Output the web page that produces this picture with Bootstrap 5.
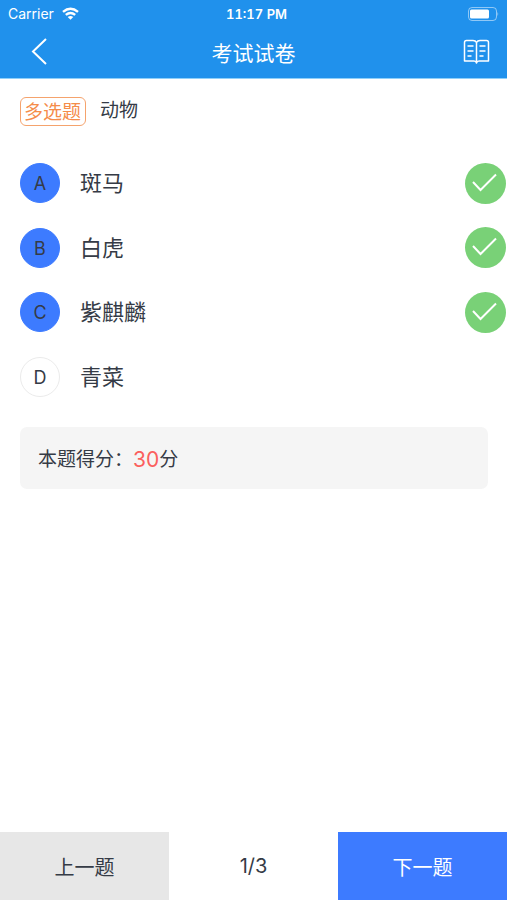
<!DOCTYPE html>
<html lang="zh-CN">
<head>
<meta charset="utf-8">
<meta name="viewport" content="width=device-width, initial-scale=1">
<title>考试试卷</title>
<link href="https://cdn.jsdelivr.net/npm/bootstrap@5.3.0/dist/css/bootstrap.min.css" rel="stylesheet">
<style>
  body { font-family: Inter, "Noto Sans CJK SC", sans-serif; color: #353b46; background: #fff; }
  .app-header { background: #2091ec; border-bottom: 1px solid #8fd0fa; }
  .status-bar { height: 27px; font-size: 14px; line-height: 20px; padding: 0 8px; }
  .status-time { font-size: 13px; font-weight: 600; font-variant-numeric: tabular-nums; margin-left: 6px; }
  .title-bar { height: 51px; padding-bottom: 2px; }
  .title-bar h1 { font-size: 21px; line-height: 32px; padding-top: 4px; }
  .title-bar .back { margin-left: 28px; }
  .title-bar .sheet { margin-right: 17px; }
  .question { padding: 18px 20px 0; min-height: 72px; }
  .type-tag { border: 1px solid #f5a36d; border-radius: 6px; color: #f58c4a; font-size: 19px; line-height: 24px; padding: 3px 4px 0 3px; }
  .question-text { font-size: 19px; line-height: 28px; margin-left: 14px; }
  .options { height: 258px; grid-template-rows: repeat(4, 1fr); }
  .option { padding: 0 1px 0 20px; }
  .letter { width: 40px; height: 40px; border: 1px solid #ebebeb; font-size: 18px; padding-top: 1px; }
  .btn-check:checked + .letter { background: #3d7bff; border-color: #3d7bff; }
  .option-text { font-size: 22px; line-height: 32px; }
  .score { margin: 18px 19px 0 20px; padding: 4px 18px 0; height: 62px; border-radius: 7px; background: #f5f5f5; font-size: 19px; }
  .points { color: #fb5f5d; font-size: 21px; }
  .pager > * { height: 68px; font-size: 20px; }
  .pager .btn { color: #353b46; padding: 3px 0 0; }
  .pager .prev { background: #e7e7e7; }
  .pager .next { background: #3d7bff; color: #fff; }
</style>
<script src="https://cdn.jsdelivr.net/npm/bootstrap@5.3.0/dist/js/bootstrap.bundle.min.js" defer></script>
</head>
<body class="min-vh-100 d-flex flex-column">
<header class="app-header text-white">
  <div class="status-bar d-flex align-items-center">
    <div class="col d-flex align-items-center gap-2">
      <span>Carrier</span>
      <svg width="17" height="13" viewBox="0 0 17 13" fill="none" stroke="#fff" stroke-width="2.4" aria-hidden="true"><path d="M1 4.800Q8.500-1.500 16 4.800M3.800 7.900Q8.500 4 13.200 7.900"/><path d="M8.500 12.800L5.700 10Q8.500 7.800 11.300 10Z" fill="#fff" stroke="none"/></svg>
    </div>
    <span class="status-time">11:17 PM</span>
    <div class="col d-flex justify-content-end">
      <svg width="32" height="14" viewBox="0 0 32 14" aria-hidden="true"><rect x="1.500" y=".5" width="28" height="13" rx="3.500" fill="none" stroke="#fff" stroke-opacity=".5"/><rect x="3" y="2.500" width="19" height="9" rx="1.500" fill="#fff"/><path d="M30.500 4.800q1.500 2.200 0 4.400z" fill="#fff" fill-opacity=".6"/></svg>
    </div>
  </div>
  <div class="title-bar d-flex align-items-center">
    <div class="col d-flex">
      <button type="button" class="back btn p-0 border-0 d-flex" aria-label="返回">
        <svg width="22" height="28" viewBox="0 0 22 28" fill="none" stroke="#fff" stroke-width="2"><path d="M18 1L5 13.500L18 26"/></svg>
      </button>
    </div>
    <h1 class="fw-normal m-0">考试试卷</h1>
    <div class="col d-flex justify-content-end">
      <button type="button" class="sheet btn p-0 border-0 d-flex" aria-label="答题卡">
        <svg width="27" height="26" viewBox="0 0 27 26" fill="none" stroke="#fff" stroke-width="1.500" stroke-linejoin="round"><path d="M13.500 3.500Q12.500 1.500 10 1.500H3.500Q1.500 1.500 1.500 3.500V22H11Q13 22 13.500 24Q14 22 16 22H25.500V3.500Q25.500 1.500 23.500 1.500H17Q14.500 1.500 13.500 3.500V24M4.500 7H10.500M4.500 12H10.500M4.500 17H8.500M16.500 7H22.500M16.500 12H22.500M16.500 17H20.500"/></svg>
      </button>
    </div>
  </div>
</header>
<main class="flex-grow-1">
  <div class="question d-flex align-items-start">
    <span class="type-tag">多选题</span>
    <span class="question-text">动物</span>
  </div>
  <div class="options d-grid">
    <label class="option d-flex align-items-center">
      <input type="checkbox" class="btn-check" name="answer" value="A" checked>
      <span class="letter rounded-circle d-flex align-items-center justify-content-center">A</span>
      <span class="option-text flex-grow-1 px-3 mx-1">斑马</span>
      <svg width="41" height="41" viewBox="0 0 41 41" role="img" aria-label="正确"><circle cx="20.500" cy="20.500" r="20.500" fill="#79d177"/><path d="M8 19L15.500 27L31 11.500" fill="none" stroke="#fff" stroke-width="2"/></svg>
    </label>
    <label class="option d-flex align-items-center">
      <input type="checkbox" class="btn-check" name="answer" value="B" checked>
      <span class="letter rounded-circle d-flex align-items-center justify-content-center">B</span>
      <span class="option-text flex-grow-1 px-3 mx-1">白虎</span>
      <svg width="41" height="41" viewBox="0 0 41 41" role="img" aria-label="正确"><circle cx="20.500" cy="20.500" r="20.500" fill="#79d177"/><path d="M8 19L15.500 27L31 11.500" fill="none" stroke="#fff" stroke-width="2"/></svg>
    </label>
    <label class="option d-flex align-items-center">
      <input type="checkbox" class="btn-check" name="answer" value="C" checked>
      <span class="letter rounded-circle d-flex align-items-center justify-content-center">C</span>
      <span class="option-text flex-grow-1 px-3 mx-1">紫麒麟</span>
      <svg width="41" height="41" viewBox="0 0 41 41" role="img" aria-label="正确"><circle cx="20.500" cy="20.500" r="20.500" fill="#79d177"/><path d="M8 19L15.500 27L31 11.500" fill="none" stroke="#fff" stroke-width="2"/></svg>
    </label>
    <label class="option d-flex align-items-center">
      <input type="checkbox" class="btn-check" name="answer" value="D">
      <span class="letter rounded-circle d-flex align-items-center justify-content-center">D</span>
      <span class="option-text flex-grow-1 px-3 mx-1">青菜</span>
    </label>
  </div>
  <div class="score d-flex align-items-center">
    <span>本题得分：</span><span class="points">30</span><span>分</span>
  </div>
</main>
<footer class="pager row g-0">
  <button type="button" class="prev btn col border-0 rounded-0">上一题</button>
  <div class="col d-flex align-items-center justify-content-center">1/3</div>
  <button type="button" class="next btn col border-0 rounded-0">下一题</button>
</footer>
</body>
</html>
